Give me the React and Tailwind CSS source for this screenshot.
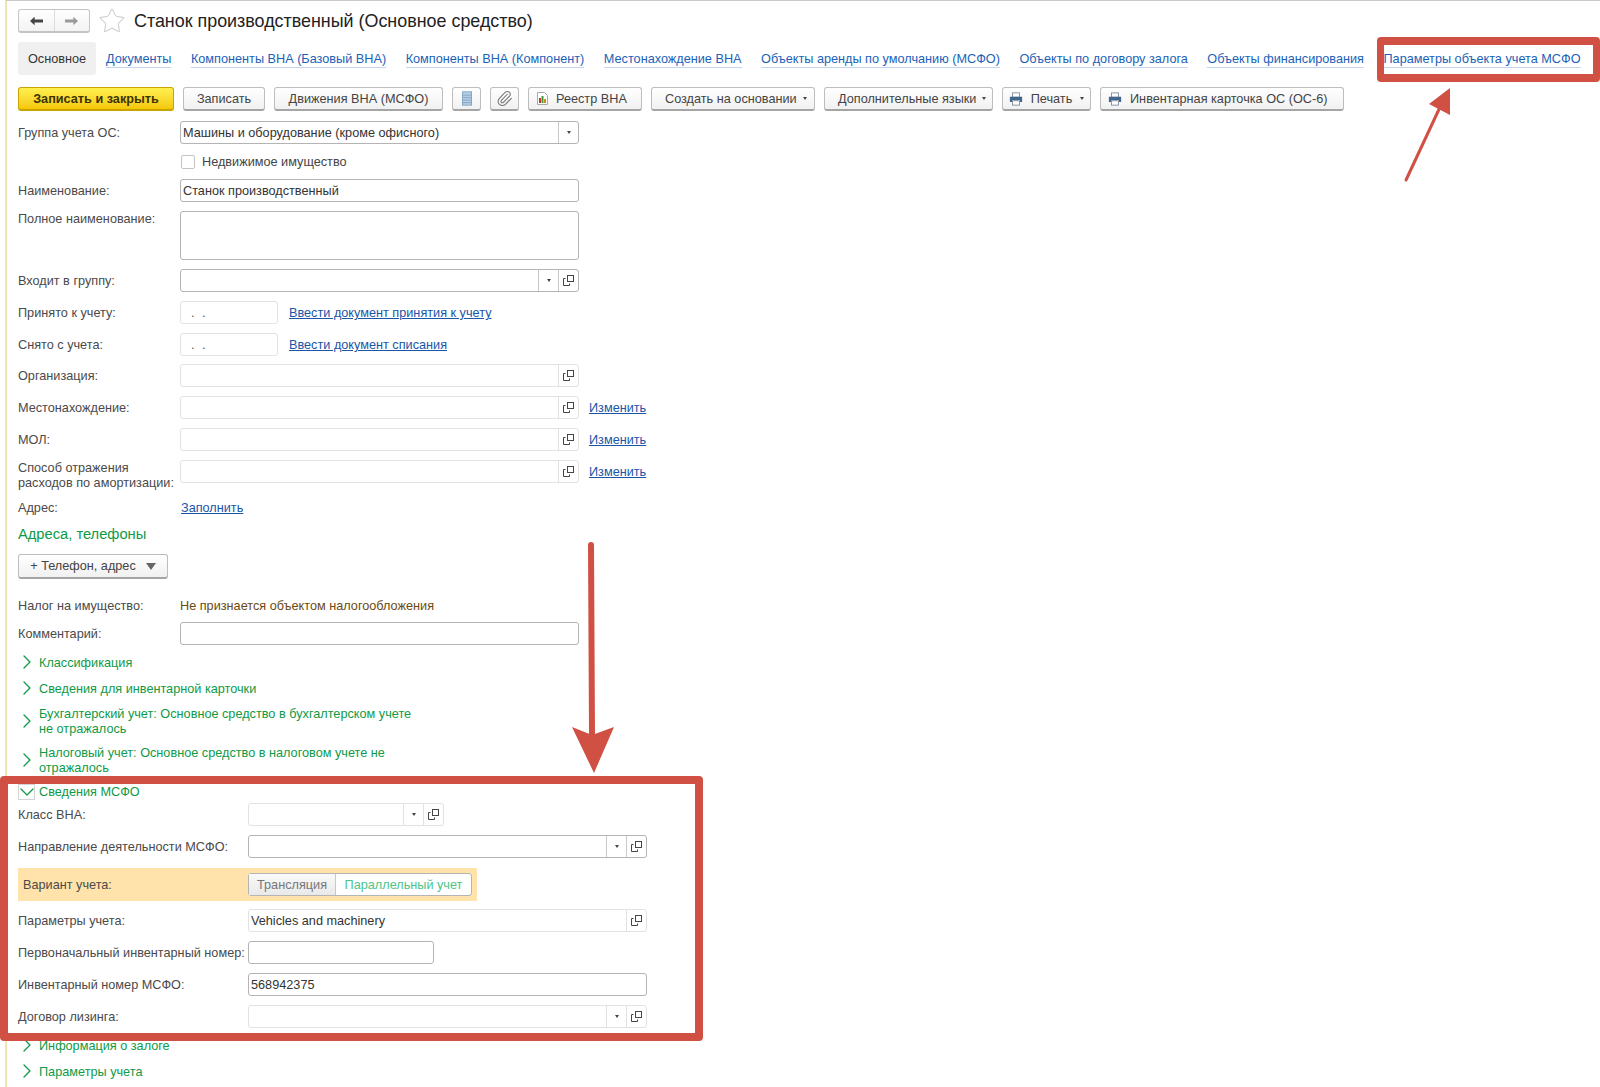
import React from 'react';
import { ChevronRight, ChevronDown, Star, Paperclip } from 'lucide-react';

const OpenIcon = () => (
  <svg width="11" height="11" viewBox="0 0 11 11" fill="none" stroke="#444" strokeWidth="1">
    <rect x="4.5" y="0.5" width="6" height="6" fill="#fff" />
    <path d="M2.5 3.5H0.5V10.5H6.5V8.5" />
  </svg>
);

const PrinterIcon = () => (
  <svg width="14" height="14" viewBox="0 0 16 15">
    <rect x="4" y="0.5" width="8" height="5" fill="#fff" stroke="#7d8b99" />
    <path d="M1 5h14v6h-2.500v-2h-9v2H1z" fill="#41668c" />
    <rect x="4" y="9.500" width="8" height="5" fill="#fff" stroke="#7d8b99" />
  </svg>
);

const StackIcon = () => (
  <svg width="10" height="15" viewBox="0 0 12 17">
    <rect x="0.500" y="0.500" width="11" height="16" fill="#b5d0e6" stroke="#7d9cb8" />
    <path d="M1 4.500h10M1 7.500h10M1 10.500h10M1 13.500h10" stroke="#7d9cb8" />
  </svg>
);

const ReportIcon = () => (
  <svg width="11" height="13" viewBox="0 0 11 13">
    <path d="M.5.5h7l3 3v9H.5z" fill="#fff" stroke="#aaa" />
    <rect x="2" y="6" width="2" height="5" fill="#c0392b" />
    <rect x="4.500" y="4" width="2" height="7" fill="#3c9a3c" />
    <rect x="7" y="7" width="2" height="4" fill="#c98a1c" />
  </svg>
);

const Caret = ({ size = 'small' }) => (
  size === 'small'
    ? <span className="inline-block w-0 h-0 border-x-[2.500px] border-x-transparent border-t-[3px] border-t-[#444]" />
    : <span className="inline-block w-0 h-0 border-x-[5px] border-x-transparent border-t-[7px] border-t-[#666]" />
);

const Button = ({ width, children, icon, caret, align = 'justify-center gap-2' }) => (
  <button className={`${width} ${align} h-6 shrink-0 flex items-center rounded-[3px] border border-[#bdbdbd] border-b-2 border-b-[#a5a5a5] bg-gradient-to-b from-white to-[#f1f1f1] text-[#444]`}>
    {icon}
    {children && <span className="pt-[2px]">{children}</span>}
    {caret && <Caret />}
  </button>
);

const Field = ({ width = 'w-[399px]', value, select, open, dark, children, height = 'h-[23px]' }) => (
  <div className={`${width} ${height} shrink-0 flex rounded-[3px] border bg-white ${dark ? 'border-[#b4b4b4]' : 'border-[#e2e2e2]'}`}>
    <div className="flex-1 min-w-0 px-[2px] leading-[23px] text-[#333]">{value}{children}</div>
    {select && (
      <div className={`w-5 flex items-center justify-center border-l ${dark ? 'border-[#c8c8c8]' : 'border-[#e2e2e2]'}`}>
        <Caret />
      </div>
    )}
    {open && (
      <div className={`w-[20px] flex items-center justify-center border-l ${dark ? 'border-[#c8c8c8]' : 'border-[#e2e2e2]'}`}>
        <OpenIcon />
      </div>
    )}
  </div>
);

const Row = ({ label, labelWidth = 'w-[162px]', className = '', children }) => (
  <div className={`flex items-center ${className}`}>
    <div className={`${labelWidth} shrink-0 pt-[2px] text-[#4a4a4a] leading-[15px] whitespace-nowrap`}>{label}</div>
    {children}
  </div>
);

const TextLink = ({ children, className = '' }) => (
  <a href="#" className={`mt-[2px] text-[#1a55a8] underline ${className}`}>{children}</a>
);

const Group = ({ children, className = 'h-[22px]' }) => (
  <div className={`flex items-center text-[#0e9a46] leading-[15px] ${className}`}>
    <ChevronRight className="w-6 h-6 -ml-[3px] shrink-0" strokeWidth={1.300} />
    <div className="pt-[2px]">{children}</div>
  </div>
);

const tabs = [
  'Документы',
  'Компоненты ВНА (Базовый ВНА)',
  'Компоненты ВНА (Компонент)',
  'Местонахождение ВНА',
  'Объекты аренды по умолчанию (МСФО)',
  'Объекты по договору залога',
  'Объекты финансирования',
  'Параметры объекта учета МСФО',
];

export default function App() {
  return (
    <div className="relative w-[1600px] h-[1087px] overflow-hidden bg-white text-[12.7px] font-['Liberation_Sans',Arial,sans-serif]">
      <div className="h-[1087px] ml-[5px] pl-[11px] border-l-2 border-l-[#ece5b4] border-t border-t-[#c9c9c9]">
        {/* header */}
        <div className="mt-[8px] h-6 flex items-center">
          <div className="w-[72px] h-6 flex rounded-[3px] border border-[#c4c4c4] border-b-2 bg-gradient-to-b from-white to-[#f3f3f3]">
            <div className="flex-1 flex items-center justify-center border-r border-[#dcdcdc]">
              <svg width="13" height="10" viewBox="0 0 14 10"><path d="M0 5l5-4.500V3.500h9v3H5v3z" fill="#444" /></svg>
            </div>
            <div className="flex-1 flex items-center justify-center">
              <svg width="13" height="10" viewBox="0 0 14 10"><path d="M14 5L9 .5v3H0v3h9v3z" fill="#9a9a9a" /></svg>
            </div>
          </div>
          <Star className="ml-2 w-7 h-7 text-[#cfcfcf]" strokeWidth={0.900} />
          <h1 className="ml-2 text-[17.900px] text-[#222] font-normal whitespace-nowrap">Станок производственный (Основное средство)</h1>
        </div>

        {/* tabs */}
        <div className="mt-[9px] h-[33px] flex items-center">
          <div className="w-[78px] h-[33px] pt-[2px] shrink-0 flex items-center justify-center rounded-[3px] bg-[#f0f0f0] text-[#333]">Основное</div>
          <div className="ml-[10px] mt-[2px] flex shrink-0 gap-[19.500px]">
            {tabs.map((tab) => (
              <a key={tab} href="#" className="text-[#1a62b8] leading-[15px] border-b border-b-[#c3d6ee] whitespace-nowrap">{tab}</a>
            ))}
          </div>
        </div>

        {/* command bar */}
        <div className="mt-3 flex gap-[9px]">
          <button className="w-[156px] h-6 pt-[2px] shrink-0 rounded-[3px] border border-[#c9a400] border-b-2 bg-gradient-to-b from-[#fff04d] to-[#f5c800] font-bold text-[#3d3400]">Записать и закрыть</button>
          <Button width="w-[82px]">Записать</Button>
          <Button width="w-[169px]">Движения ВНА (МСФО)</Button>
          <Button width="w-[29px]" icon={<StackIcon />} />
          <Button width="w-[29px]" icon={<Paperclip className="w-[17px] h-[17px] text-[#777]" strokeWidth={1.500} />} />
          <Button width="w-[114px]" align="justify-start gap-2 pl-[8px]" icon={<ReportIcon />}>Реестр ВНА</Button>
          <Button width="w-[164px]" align="justify-start gap-[6px] pl-[13px]" caret>Создать на основании</Button>
          <Button width="w-[169px]" align="justify-start gap-[6px] pl-[13px]" caret>Дополнительные языки</Button>
          <Button width="w-[89px]" icon={<PrinterIcon />} caret>Печать</Button>
          <Button width="w-[244px]" align="justify-start gap-2 pl-[7px]" icon={<PrinterIcon />}>Инвентарная карточка ОС (ОС-6)</Button>
        </div>

        {/* main form */}
        <Row label="Группа учета ОС:" className="mt-[10px]">
          <Field dark select value="Машины и оборудование (кроме офисного)" />
        </Row>
        <div className="mt-[6px] h-[23px] ml-[162px] flex items-center text-[#444]">
          <span className="ml-[1px] mr-[7px] w-[14px] h-[14px] rounded-[2px] border border-[#c4c4c4] bg-white" />
          <span className="pt-[2px]">Недвижимое имущество</span>
        </div>
        <Row label="Наименование:" className="mt-[6px]">
          <Field dark value="Станок производственный" />
        </Row>
        <div className="mt-[9px] flex items-start">
          <div className="w-[162px] shrink-0 text-[#4a4a4a] leading-[15px] pt-px">Полное наименование:</div>
          <Field dark height="h-[49px]" />
        </div>
        <Row label="Входит в группу:" className="mt-[9px]">
          <Field dark select open />
        </Row>
        <Row label="Принято к учету:" className="mt-[9px]">
          <Field width="w-[98px]"><span className="pl-2 tracking-[2px] text-[#555]">. .</span></Field>
          <TextLink className="ml-[11px]">Ввести документ принятия к учету</TextLink>
        </Row>
        <Row label="Снято с учета:" className="mt-[9px]">
          <Field width="w-[98px]"><span className="pl-2 tracking-[2px] text-[#555]">. .</span></Field>
          <TextLink className="ml-[11px]">Ввести документ списания</TextLink>
        </Row>
        <Row label="Организация:" className="mt-[8px]">
          <Field open />
        </Row>
        <Row label="Местонахождение:" className="mt-[9px]">
          <Field open />
          <TextLink className="ml-[10px]">Изменить</TextLink>
        </Row>
        <Row label="МОЛ:" className="mt-[9px]">
          <Field open />
          <TextLink className="ml-[10px]">Изменить</TextLink>
        </Row>
        <Row label={<span className="block mt-[6px]">Способ отражения<br />расходов по амортизации:</span>} className="mt-[9px] h-[23px]">
          <Field open />
          <TextLink className="ml-[10px]">Изменить</TextLink>
        </Row>
        <Row label="Адрес:" className="mt-[13px] h-[23px]">
          <TextLink className="ml-[1px]">Заполнить</TextLink>
        </Row>

        {/* contacts */}
        <div className="mt-[5px] h-5 leading-5 text-[14.700px] text-[#0e9a46]">Адреса, телефоны</div>
        <button className="mt-[10px] w-[150px] h-[25px] flex items-center justify-center gap-[10px] rounded-[3px] border border-[#bdbdbd] border-b-2 border-b-[#a5a5a5] bg-gradient-to-b from-white to-[#f1f1f1] text-[#444]">
          <span className="pt-[2px]">+ Телефон, адрес</span> <Caret size="large" />
        </button>

        <Row label="Налог на имущество:" className="mt-[15px] h-[23px]">
          <span className="pt-[2px] text-[#6b4a10]">Не признается объектом налогообложения</span>
        </Row>
        <Row label="Комментарий:" className="mt-[5px]">
          <Field dark />
        </Row>

        {/* collapsed groups */}
        <Group className="mt-[6px] h-[22px]">Классификация</Group>
        <Group className="mt-1 h-[22px]">Сведения для инвентарной карточки</Group>
        <Group className="mt-[7px] h-[30px]">Бухгалтерский учет: Основное средство в бухгалтерском учете<br />не отражалось</Group>
        <Group className="mt-2 h-[31px]">Налоговый учет: Основное средство в налоговом учете не<br />отражалось</Group>

        {/* IFRS group */}
        <div className="mt-[9px] h-[15px] flex items-center text-[#0e9a46]">
          <span className="w-[17px] h-[16px] flex items-center justify-center border border-[#d4d4d4] mr-1">
            <ChevronDown className="w-6 h-6 shrink-0 -mx-1" strokeWidth={1.300} />
          </span>
          <span className="pt-[2px]">Сведения МСФО</span>
        </div>
        <Row label="Класс ВНА:" labelWidth="w-[230px]" className="mt-1">
          <Field width="w-[196px]" select open />
        </Row>
        <Row label="Направление деятельности МСФО:" labelWidth="w-[230px]" className="mt-[9px]">
          <Field width="w-[399px]" dark select open />
        </Row>
        <div className="mt-[10px] w-[459px] h-[33px] flex items-center bg-[#ffe3ab]">
          <div className="w-[230px] pl-[5px] pt-[2px] text-[#4a4a4a]">Вариант учета:</div>
          <div className="w-[224px] h-[23px] flex rounded-[3px] border border-[#b4b4b4] bg-white">
            <div className="w-[87px] pt-[2px] flex items-center justify-center border-r border-[#c8c8c8] bg-gradient-to-b from-[#fafafa] to-[#e9e9e9] text-[#777]">Трансляция</div>
            <div className="flex-1 pt-[2px] flex items-center justify-center text-[#4cc48a]">Параллельный учет</div>
          </div>
        </div>
        <Row label="Параметры учета:" labelWidth="w-[230px]" className="mt-2">
          <Field width="w-[399px]" open value="Vehicles and machinery" />
        </Row>
        <Row label="Первоначальный инвентарный номер:" labelWidth="w-[230px]" className="mt-[9px]">
          <Field width="w-[186px]" dark />
        </Row>
        <Row label="Инвентарный номер МСФО:" labelWidth="w-[230px]" className="mt-[9px]">
          <Field width="w-[399px]" dark value="568942375" />
        </Row>
        <Row label="Договор лизинга:" labelWidth="w-[230px]" className="mt-[9px]">
          <Field width="w-[399px]" select open />
        </Row>

        <Group className="mt-[6px] h-[22px]">Информация о залоге</Group>
        <Group className="mt-1 h-[22px]">Параметры учета</Group>
      </div>

      {/* annotations over the form */}
      <div className="absolute left-0 top-[776px] w-[703px] h-[265px] rounded-[4px] border-8 border-[#d05044]" />
      <div className="absolute left-[1377px] top-[37px] w-[223px] h-[45px] rounded-[4px] border-x-[7px] border-y-8 border-[#d05044]" />
      <svg className="absolute left-0 top-0 pointer-events-none" width="1600" height="1087" fill="none">
        <path d="M1406 180L1441 105" stroke="#d05044" strokeWidth="3" strokeLinecap="round" />
        <path d="M1450 88L1429 104L1450 115Z" fill="#d05044" />
        <path d="M591 545L592 735" stroke="#d05044" strokeWidth="6" strokeLinecap="round" />
        <path d="M572 727L592 735L614 727L594 773Z" fill="#d05044" />
      </svg>
    </div>
  );
}
